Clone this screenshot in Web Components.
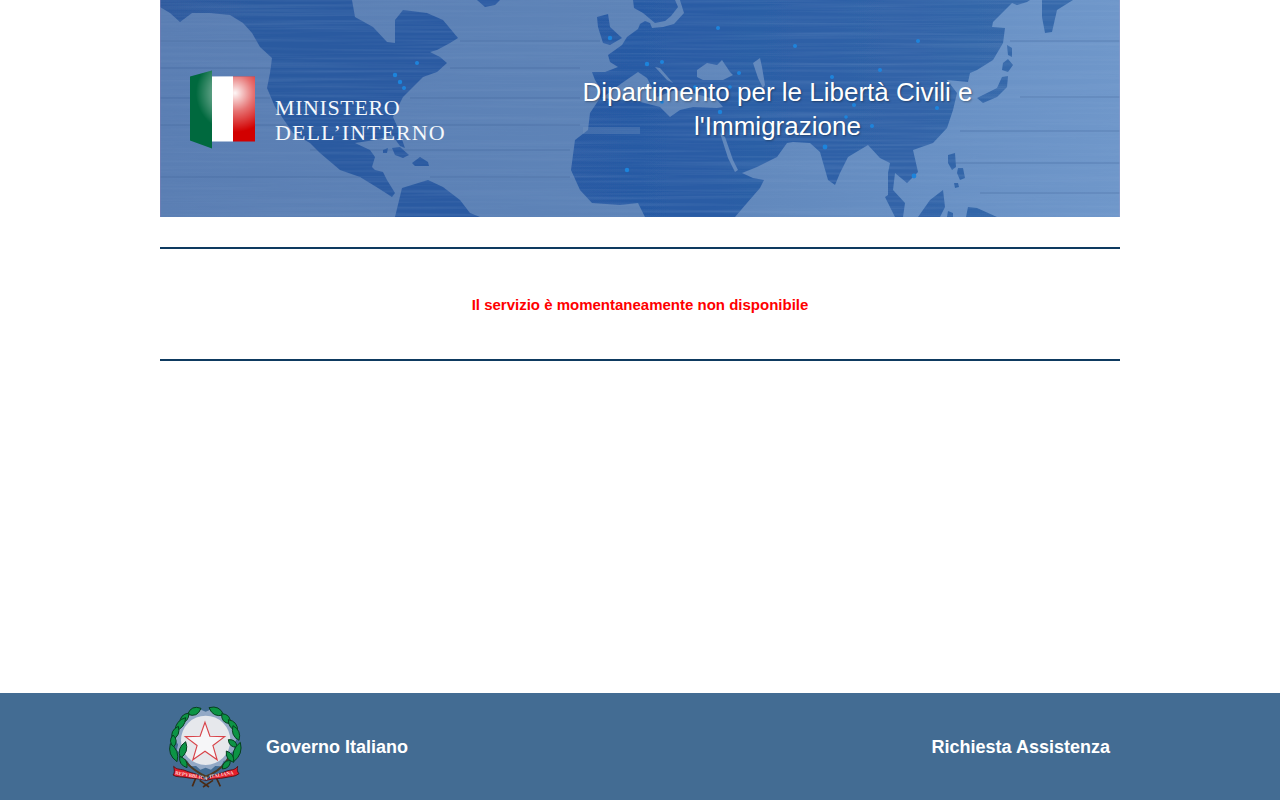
<!DOCTYPE html>
<html lang="it">
<head>
<meta charset="utf-8">
<title>Il servizio è momentaneamente non disponibile</title>
<style>
html,body{margin:0;padding:0;height:100%;background:#fff;font-family:"Liberation Sans",Arial,sans-serif}
</style>
</head>
<body>
<app-page>
  <site-banner title-text="Dipartimento per le Libertà Civili e l'Immigrazione"></site-banner>
  <status-message>Il servizio è momentaneamente non disponibile</status-message>
  <site-footer slot="footer"></site-footer>
</app-page>
<template id="banner-tpl">
<style>
:host{display:block;position:relative;width:960px;height:217px;margin:0 auto;overflow:hidden;background:#5f86ba}
svg.map{position:absolute;inset:0;width:960px;height:217px;display:block}
.row{position:relative;display:grid;grid-template-columns:340px 555px;height:100%;align-items:center}
.brand{display:flex;align-items:flex-start;padding-left:30px}
.ml{font:22px/25px "Liberation Serif",serif;color:#f4f8fc;margin:26px 0 0 20px;white-space:nowrap}
.ml span{display:block;letter-spacing:.6px}
.ml span+span{letter-spacing:1.05px}
h1{margin:0;padding:0 70px;font:400 26px/34px "Liberation Sans",Arial,sans-serif;color:#fff;text-align:center;text-shadow:1px 1px 2px rgba(0,0,0,.35)}
</style>
<svg class="map" viewBox="0 0 960 217" aria-hidden="true">
<defs>
<linearGradient id="sea"><stop offset="0" stop-color="#5a7eb3"/><stop offset=".5" stop-color="#5e84b8"/><stop offset=".8" stop-color="#6890c4"/><stop offset="1" stop-color="#6f97ca"/></linearGradient>
<linearGradient id="land" gradientUnits="userSpaceOnUse" x1="0" x2="960" y1="0" y2="0"><stop offset="0" stop-color="#2d5a9e"/><stop offset=".5" stop-color="#285aa4"/><stop offset=".85" stop-color="#3366a9"/><stop offset="1" stop-color="#386aac"/></linearGradient>
<filter id="wood" x="0" y="0" width="100%" height="100%"><feTurbulence type="fractalNoise" baseFrequency="0.004 0.3" numOctaves="3" seed="7"/><feColorMatrix values="0 0 0 0 .75  0 0 0 0 .85  0 0 0 0 1  1.6 0 0 0 -.62"/></filter>
<filter id="soft"><feGaussianBlur stdDeviation=".5"/></filter>
<path id="lands" fill-rule="evenodd" clip-rule="evenodd" d="
M0 7 10 13 20 22 32 13 50 13 70 15 83 23 92 33 100 47 112 58 110 73 107 88 115 107 133 133 150 143 160 153 180 170 200 177 218 188 232 197 235 193 227 180 223 172 215 170 212 167 215 157 210 150 195 143 215 140 232 135 240 146 245 148 238 128 233 117 243 97 263 77 277 72 287 63 280 57 270 52 277 50 290 43 298 38 283 20 267 13 243 10 235 20 235 43 227 42 213 27 195 17 192 0 0 0Z
M235 217 242 188 268 180 283 187 300 200 310 213 320 217Z
M317 0 325 7 335 5 340 0Z
M437 17 448 14 450 27 462 38 450 45 443 43 438 27Z
M223 150 228 148 227 153 223 153Z
M232 148 240 147 249 155 243 158 235 155Z
M252 163 260 157 268 162 269 166 255 166Z
M473 0 474 8 483 13 495 23 505 21 511 16 518 7 515 0Z
M520 0 524 13 514 24 503 27 492 28 490 23 485 21 480 24 478 29 467 37 462 45 448 55 450 62 458 67 445 72 432 72 435 80 440 88 440 98 430 113 428 130 415 140 411 170 420 190 432 203 460 205 478 203 485 217 575 217 587 203 600 188 604 180 593 178 582 173 597 167 617 157 627 143 633 142 650 143 660 152 668 180 675 185 680 173 688 157 708 145 720 158 730 163 728 173 728 195 725 197 728 203 735 217 743 217 745 203 733 190 735 173 747 183 758 172 753 150 773 143 787 128 793 110 797 93 787 80 808 82 810 73 817 70 833 60 843 43 845 28 832 27 833 22 852 3 857 5 867 2 870 0Z
M442 98 462 83 478 72 487 78 497 97 515 90 533 93 557 100 563 107 557 108 533 107 520 110 510 117 500 107 473 100 460 100Z
M537 70 547 63 557 65 562 60 570 72 573 75 563 80 543 80 537 77Z
M593 63 600 58 602 67 605 85 603 88 598 78Z
M495 67 500 68 513 83 507 80Z
M560 133 565 137 573 160 578 170 575 172 568 158Z
M882 0 882 17 885 33 892 32 897 10 913 0Z
M847 45 852 48 852 57 848 55Z
M843 63 848 59 853 65 848 72 842 70Z
M842 77 848 76 847 87 837 97 823 103 817 98 823 95 837 88Z
M788 155 795 153 796 167 792 170 788 163Z
M798 168 803 168 805 178 800 180 797 173Z
M794 183 798 183 799 187 795 188Z
M758 217 770 200 783 190 785 207 780 217Z
M787 217 788 211 793 213 793 217Z
M806 217 808 207 817 208 837 217Z"/>
<clipPath id="landclip"><use href="#lands"/></clipPath>
</defs>
<rect width="960" height="217" fill="url(#sea)"/>
<rect width="960" height="217" filter="url(#wood)" opacity=".06"/>
<g stroke="#3f6398" stroke-opacity=".45" stroke-width="1" fill="none">
<path d="M0 41H100M300 41H440M0 68H110M290 68H420M0 98H110M250 98H420M0 125H130M250 125H420M150 150H410M0 177H200M270 177H410M850 41H960M860 97H960M800 131H960M790 163H960M820 193H960"/>
</g>
<use href="#lands" fill="url(#land)" filter="url(#soft)"/>
<g clip-path="url(#landclip)"><rect width="960" height="217" filter="url(#wood)" opacity=".14"/></g>
<path d="M423 127H480V134H423Z" fill="#7d9cc4" opacity=".3"/>
<g fill="#1e84dc" filter="url(#soft)">
<circle cx="235" cy="75" r="2.200"/><circle cx="240" cy="82" r="2.200"/><circle cx="244" cy="88" r="2"/><circle cx="257" cy="63" r="2"/><circle cx="450" cy="38" r="2.200"/><circle cx="558" cy="28" r="2"/><circle cx="487" cy="64" r="2.200"/><circle cx="502" cy="62" r="2"/><circle cx="579" cy="73" r="2"/><circle cx="570" cy="87" r="1.800"/><circle cx="535" cy="87" r="1.800"/><circle cx="560" cy="112" r="2.200"/><circle cx="467" cy="170" r="2.200"/><circle cx="635" cy="46" r="2"/><circle cx="502" cy="102" r="1.800"/><circle cx="758" cy="41" r="2"/><circle cx="720" cy="70" r="2"/><circle cx="672" cy="77" r="2"/><circle cx="694" cy="105" r="2"/><circle cx="686" cy="117" r="1.800"/><circle cx="712" cy="126" r="2"/><circle cx="777" cy="108" r="2"/><circle cx="665" cy="147" r="2.400"/><circle cx="754" cy="176" r="2.400"/>
</g>
<rect width="1" height="217" fill="#7c7fb5" opacity=".6"/>
<rect x="959" width="1" height="217" fill="#8f9ccb" opacity=".6"/>
</svg>
<div class="row">
  <div class="brand"><flag-logo></flag-logo><div class="ml"><span>MINISTERO</span><span>DELL’INTERNO</span></div></div>
  <h1></h1>
</div>
</template>
<script>
const def=(n,c)=>customElements.define(n,c);
def('app-page',class extends HTMLElement{constructor(){super();this.attachShadow({mode:'open'}).innerHTML=`<style>:host{display:flex;flex-direction:column;min-height:800px}main{flex:1}</style><main><slot></slot></main><slot name="footer"></slot>`}});
def('flag-logo',class extends HTMLElement{constructor(){super();this.attachShadow({mode:'open'}).innerHTML=`<style>:host{display:block;width:65px;height:80px;flex:none}svg{display:block}</style><svg width="65" height="80" viewBox="0 0 65 80" aria-hidden="true"><defs><radialGradient id="sh" gradientUnits="userSpaceOnUse" cx="45" cy="24" r="46"><stop offset="0" stop-color="#fff" stop-opacity=".97"/><stop offset=".4" stop-color="#fff" stop-opacity=".45"/><stop offset=".85" stop-color="#fff" stop-opacity="0"/></radialGradient></defs><path d="M0 7.500 22 1.500V79.500L0 71.500Z" fill="#00693e"/><rect x="22" y="7.500" width="21" height="65" fill="#fff"/><rect x="43" y="7.500" width="22" height="65" fill="#d20000"/><path d="M0 7.500 22 1.500V79.500L0 71.500ZM22 7.500H65V72.500H22Z" fill="url(#sh)"/></svg>`}});
def('site-banner',class extends HTMLElement{constructor(){super();const s=this.attachShadow({mode:'open'});s.appendChild(document.getElementById('banner-tpl').content.cloneNode(true));s.querySelector('h1').textContent=this.getAttribute('title-text')}});
def('status-message',class extends HTMLElement{constructor(){super();this.attachShadow({mode:'open'}).innerHTML=`<style>:host{width:960px;height:114px;margin:30px auto 0;padding-top:2px;box-sizing:border-box;border-top:2px solid #0e3a60;border-bottom:2px solid #0e3a60;display:flex;align-items:center;justify-content:center;font:700 15px/20px "Liberation Sans",Arial,sans-serif;color:#f00}</style><slot></slot>`}});
const leaf=(a,b,c,d,w=11)=>{w*=1.7;const mx=(a+c)/2,my=(b+d)/2,dx=c-a,dy=d-b,l=Math.hypot(dx,dy)||1,nx=-dy/l*w,ny=dx/l*w;return `<path d="M${a} ${b}Q${mx+nx} ${my+ny} ${c} ${d}Q${mx-nx} ${my-ny} ${a} ${b}Z"/>`};
const gear=(()=>{let d='';const n=18,cx=122,cy=110;for(let i=0;i<n*2;i++){const r=i%2?84:92,t=i/(n*2)*Math.PI*2;d+=(i?'L':'M')+(cx+r*Math.cos(t)).toFixed(1)+' '+(cy+r*Math.sin(t)).toFixed(1)}return d+'Z'})();
const star=(()=>{let d='';const cx=120,cy=120;for(let i=0;i<10;i++){const r=i%2?25:62,t=-Math.PI/2+i*Math.PI/5;d+=(i?'L':'M')+(cx+r*Math.cos(t)).toFixed(1)+' '+(cy+r*Math.sin(t)).toFixed(1)}return d+'Z'})();
def('state-emblem',class extends HTMLElement{constructor(){super();this.attachShadow({mode:'open'}).innerHTML=`<style>:host{display:block;width:84px;height:88px;flex:none;margin-top:1px}svg{display:block}</style><svg width="84" height="88" viewBox="0 0 252 264" aria-hidden="true">
<path d="${gear}" fill="#93a9c6"/>
<circle cx="122" cy="112" r="74" fill="#e6e8ec"/>
<path d="${star}" fill="#f6f6f8" stroke="#d8444a" stroke-width="3.500"/>
<path d="M58 170C75 195 100 210 125 222M190 165C175 195 150 210 120 222" fill="none" stroke="#4b3a22" stroke-width="6"/>
<g fill="#0c9445" stroke="#06401f" stroke-width="3">
${leaf(108,16,68,34,13)}${leaf(72,30,44,62,11)}${leaf(62,44,30,84,11)}${leaf(40,70,22,110,11)}${leaf(24,96,26,132,10)}${leaf(62,116,46,166,12)}${leaf(16,122,36,176,12)}${leaf(44,160,66,194,10)}
${leaf(132,14,176,36,13)}${leaf(170,32,196,62,12)}${leaf(190,50,218,84,11)}${leaf(204,68,222,112,11)}${leaf(190,110,216,132,10)}${leaf(226,118,206,176,12)}${leaf(184,144,206,178,10)}${leaf(196,172,172,198,10)}
</g>
<path d="M96 216 82 250M150 216 166 250M104 232 132 252M144 232 114 252" stroke="#4a2a14" stroke-width="5" fill="none"/>
<path d="M26 190C36 202 46 196 64 204 84 212 104 212 122 232 102 226 84 228 66 224 50 220 34 224 24 216 30 210 28 200 26 190Z" fill="#e51f2b" stroke="#4a0d10" stroke-width="2.500"/>
<path d="M218 190C208 204 198 198 180 206 160 214 142 214 124 232 144 226 162 228 180 224 196 220 210 222 222 212 216 206 216 198 218 190Z" fill="#e51f2b" stroke="#4a0d10" stroke-width="2.500"/>
<text x="30" y="214" font-family="Liberation Serif" font-size="15" fill="#ffd9d9" transform="rotate(10 30 214)">REPVBBLICA</text>
<text x="134" y="226" font-family="Liberation Serif" font-size="15" fill="#ffd9d9" transform="rotate(-10 134 226)">ITALIANA</text>
</svg>`}});
def('site-footer',class extends HTMLElement{constructor(){super();this.attachShadow({mode:'open'}).innerHTML=`<style>:host{display:block;background:#436c93;height:107px;color:#fff}.in{width:960px;height:100%;margin:0 auto;box-sizing:border-box;padding:0 10px 0 5px;display:flex;align-items:center;font:700 18px/22px "Liberation Sans",Arial,sans-serif}.g{margin-left:17px;flex:1}</style><div class="in"><state-emblem></state-emblem><span class="g">Governo Italiano</span><span>Richiesta Assistenza</span></div>`}});
</script>
</body>
</html>
